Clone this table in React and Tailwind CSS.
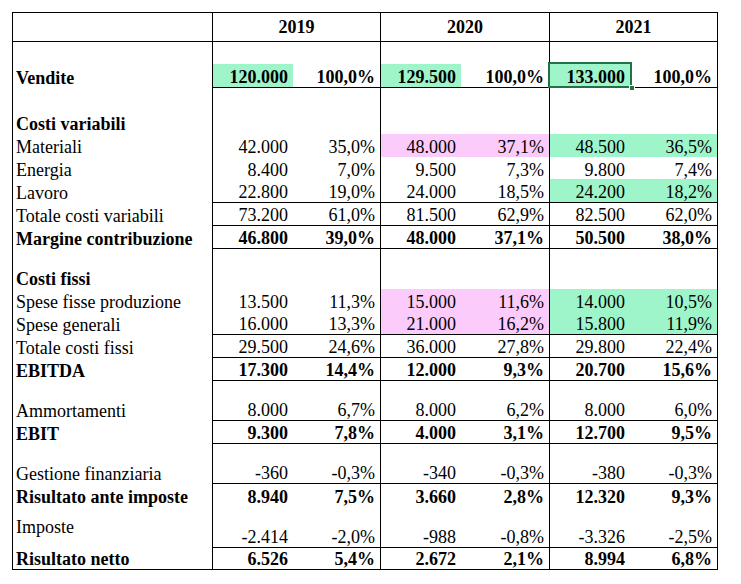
const G = 'bg-[#9ef5c9]';
const P = 'bg-[#fbcbfb]';

const rows = [
  { label: 'Vendite', bold: true, h: 46, line: true, v: ['120.000', '100,0%', '129.500', '100,0%', '133.000', '100,0%'], fill: [G, null, G, null, G, null], sel: 4 },
  { h: 23 },
  { label: 'Costi variabili', bold: true, h: 23 },
  { label: 'Materiali', h: 23, v: ['42.000', '35,0%', '48.000', '37,1%', '48.500', '36,5%'], fill: [null, null, P, P, G, G] },
  { label: 'Energia', h: 23, v: ['8.400', '7,0%', '9.500', '7,3%', '9.800', '7,4%'] },
  { label: 'Lavoro', h: 23, line: true, v: ['22.800', '19,0%', '24.000', '18,5%', '24.200', '18,2%'], fill: [null, null, null, null, G, G] },
  { label: 'Totale costi variabili', h: 23, line: true, v: ['73.200', '61,0%', '81.500', '62,9%', '82.500', '62,0%'] },
  { label: 'Margine contribuzione', bold: true, h: 23, line: true, v: ['46.800', '39,0%', '48.000', '37,1%', '50.500', '38,0%'] },
  { h: 17 },
  { label: 'Costi fissi', bold: true, h: 23 },
  { label: 'Spese fisse produzione', h: 23, v: ['13.500', '11,3%', '15.000', '11,6%', '14.000', '10,5%'], fill: [null, null, P, P, G, G] },
  { label: 'Spese generali', h: 23, line: true, v: ['16.000', '13,3%', '21.000', '16,2%', '15.800', '11,9%'], fill: [null, null, P, P, G, G] },
  { label: 'Totale costi fissi', h: 23, line: true, v: ['29.500', '24,6%', '36.000', '27,8%', '29.800', '22,4%'] },
  { label: 'EBITDA', bold: true, h: 23, line: true, v: ['17.300', '14,4%', '12.000', '9,3%', '20.700', '15,6%'] },
  { label: 'Ammortamenti', h: 40, line: true, v: ['8.000', '6,7%', '8.000', '6,2%', '8.000', '6,0%'] },
  { label: 'EBIT', bold: true, h: 23, line: true, v: ['9.300', '7,8%', '4.000', '3,1%', '12.700', '9,5%'] },
  { label: 'Gestione finanziaria', h: 40, line: true, v: ['-360', '-0,3%', '-340', '-0,3%', '-380', '-0,3%'] },
  { label: 'Risultato ante imposte', bold: true, h: 23, v: ['8.940', '7,5%', '3.660', '2,8%', '12.320', '9,3%'] },
  { label: 'Imposte', h: 41, line: true, mid: true, v: ['-2.414', '-2,0%', '-988', '-0,8%', '-3.326', '-2,5%'] },
  { label: 'Risultato netto', bold: true, h: 21, v: ['6.526', '5,4%', '2.672', '2,1%', '8.994', '6,8%'] },
];

const groupW = ['w-[168px]', 'w-[169px]', 'w-[168px]'];
const pctW = ['w-[87px]', 'w-[88px]', 'w-[87px]'];

function Cell({ text, fill, w, selected }) {
  return (
    <div className={`${w} flex h-full flex-col justify-end`}>
      <div className={`relative h-[23px] pr-[5px] pt-[3px] text-right leading-[20px] ${fill || ''}`}>
        {text}
        {selected && (
          <>
            <div className="absolute -inset-x-[2px] -top-[2px] -bottom-[1px] border-2 border-[#217346]" />
            <div className="absolute -bottom-[4px] -right-[5px] h-[6px] w-[6px] border border-white bg-[#217346]" />
          </>
        )}
      </div>
    </div>
  );
}

function Row({ r }) {
  const v = r.v || [];
  const fill = r.fill || [];
  return (
    <div className="flex" style={{ height: r.h }}>
      <div className={`flex w-[199px] pl-[3px] leading-[20px] ${r.mid ? 'items-center pb-[2px]' : 'items-end'} ${r.bold ? 'font-bold' : ''}`}>
        {r.label}
      </div>
      {[0, 1, 2].map((g) => (
        <div key={g} className={`${groupW[g]} flex border-l border-black ${r.line ? 'border-b' : ''} ${r.bold ? 'font-bold' : ''}`}>
          <Cell text={v[g * 2]} fill={fill[g * 2]} w="w-[80px]" selected={r.sel === g * 2} />
          <Cell text={v[g * 2 + 1]} fill={fill[g * 2 + 1]} w={pctW[g]} />
        </div>
      ))}
    </div>
  );
}

export default function App() {
  return (
    <div className="min-h-screen bg-white pl-[12px] pt-[12px] font-['Liberation_Serif',serif] text-[18px] text-black">
      <div className="w-[706px] border border-black">
        <div className="flex h-[29px] border-b border-black font-bold">
          <div className="w-[199px]" />
          {['2019', '2020', '2021'].map((y, i) => (
            <div key={y} className={`${groupW[i]} flex items-center justify-center border-l border-black`}>
              {y}
            </div>
          ))}
        </div>
        {rows.map((r, i) => (
          <Row key={i} r={r} />
        ))}
      </div>
    </div>
  );
}
